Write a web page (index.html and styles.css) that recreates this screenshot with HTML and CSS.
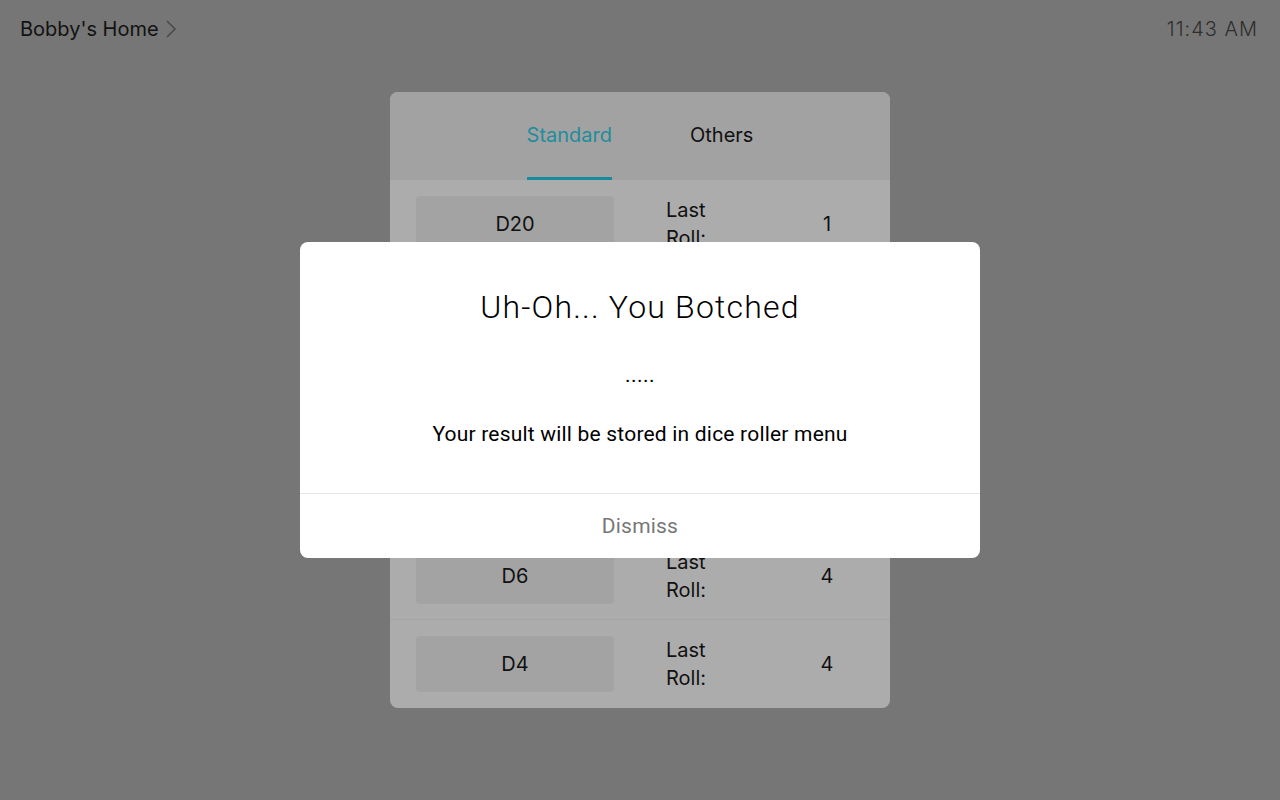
FILE: index.html
```html
<!DOCTYPE html>
<html>
<head>
<meta charset="utf-8">
<link rel="stylesheet" href="styles.css">
</head>
<body>
<div class="screen">
  <header class="topbar">
    <div class="home">Bobby's Home
      <svg class="chev" width="12" height="20" viewBox="0 0 12 20"><path d="M2 2 L10 10 L2 18" fill="none" stroke="#4a4a4a" stroke-width="1.6"/></svg>
    </div>
    <div class="time">11:43 AM</div>
  </header>
  <main class="main">
    <section class="panel">
      <nav class="tabs">
        <div class="tab active">Standard</div>
        <div class="tab">Others</div>
      </nav>
      <div class="rows">
        <div class="row"><div class="die">D20</div><div class="label">Last Roll:</div><div class="value">1</div></div>
        <div class="row"><div class="die">D12</div><div class="label">Last Roll:</div><div class="value">7</div></div>
        <div class="row"><div class="die">D10</div><div class="label">Last Roll:</div><div class="value">3</div></div>
        <div class="row"><div class="die">D8</div><div class="label">Last Roll:</div><div class="value">5</div></div>
        <div class="row"><div class="die">D6</div><div class="label">Last Roll:</div><div class="value">4</div></div>
        <div class="row"><div class="die">D4</div><div class="label">Last Roll:</div><div class="value">4</div></div>
      </div>
    </section>
  </main>
  <div class="overlay">
    <div class="modal">
      <h1 class="title">Uh-Oh... You Botched</h1>
      <p class="dots">.....</p>
      <p class="msg">Your result will be stored in dice roller menu</p>
      <div class="actions">Dismiss</div>
    </div>
  </div>
</div>
</body>
</html>
```

FILE: styles.css
```css
html, body {
  margin: 0;
  padding: 0;
}
body {
  background: #767676;
  font-family: Inter, "Open Sans", "Liberation Sans", sans-serif;
  color: #111;
}
.screen {
  width: 1280px;
  height: 800px;
  position: relative;
  overflow: hidden;
}
.topbar {
  height: 58px;
  display: flex;
  align-items: center;
  justify-content: space-between;
  padding: 0 22px 0 20px;
}
.home {
  font-size: 20px;
  color: #121212;
  display: flex;
  align-items: center;
  gap: 6px;
}
.chev {
  display: block;
}
.time {
  font-size: 20px;
  font-weight: 300;
  color: #2e2e2e;
  letter-spacing: 1px;
}
.main {
  display: flex;
  justify-content: center;
  padding-top: 34px;
}
.panel {
  width: 500px;
  border-radius: 8px;
  overflow: hidden;
  background: #acacac;
}
.tabs {
  height: 88px;
  background: #a2a2a2;
  display: flex;
  justify-content: center;
  gap: 78px;
}
.tab {
  font-size: 20px;
  line-height: 86px;
  color: #111;
  height: 85px;
  border-bottom: 3px solid transparent;
}
.tab.active {
  color: #1f8d9c;
  border-bottom-color: #168b9b;
}
.row {
  height: 87px;
  border-bottom: 1px solid #a5a5a5;
  display: flex;
  align-items: center;
  padding: 0 26px;
}
.row:last-child {
  border-bottom: none;
  height: 88px;
}
.die {
  width: 198px;
  height: 56px;
  border-radius: 4px;
  background: #a3a3a3;
  display: flex;
  align-items: center;
  justify-content: center;
  font-size: 20px;
  color: #111;
}
.label {
  margin-left: 52px;
  width: 62px;
  font-size: 20px;
  line-height: 28px;
  color: #111;
}
.value {
  margin-left: 69px;
  width: 60px;
  text-align: center;
  font-size: 20px;
  color: #111;
}
.overlay {
  position: absolute;
  inset: 0;
  display: flex;
  align-items: center;
  justify-content: center;
}
.modal {
  width: 680px;
  height: 316px;
  background: #fff;
  border-radius: 8px;
  display: flex;
  flex-direction: column;
  align-items: center;
  font-family: Roboto, "Liberation Sans", sans-serif;
  overflow: hidden;
}
.title {
  margin: 45px 0 0;
  font-size: 32px;
  line-height: 40px;
  font-weight: 300;
  letter-spacing: 1.2px;
  color: #000;
}
.dots {
  margin: 33px 0 0;
  font-size: 21px;
  line-height: 30px;
  letter-spacing: 0.5px;
  color: #000;
}
.msg {
  margin: 29px 0 0;
  font-size: 21px;
  line-height: 30px;
  letter-spacing: 0.2px;
  color: #000;
}
.actions {
  margin-top: auto;
  align-self: stretch;
  height: 64px;
  border-top: 1px solid #e6e6e6;
  display: flex;
  align-items: center;
  justify-content: center;
  font-size: 21px;
  letter-spacing: 0.2px;
  color: #777;
}
```
